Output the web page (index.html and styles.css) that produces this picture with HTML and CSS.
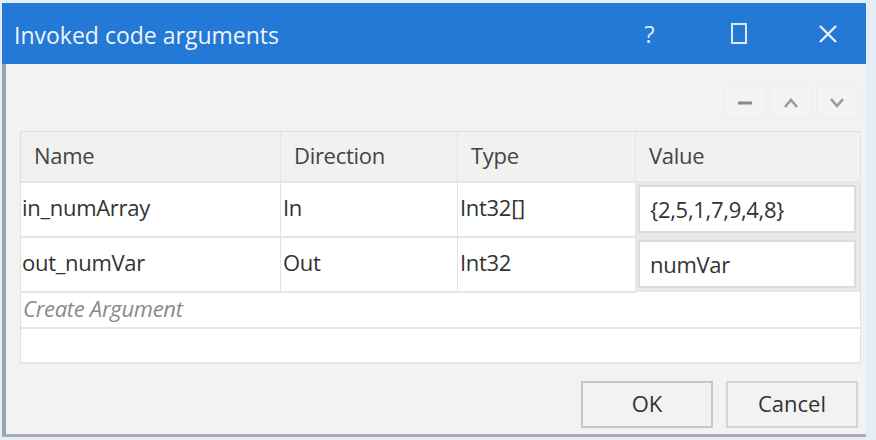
FILE: index.html
```html
<!DOCTYPE html>
<html>
<head>
  <title>Invoked code arguments</title>
  <link rel="stylesheet" href="styles.css">
</head>
<body>
  <div class="window">
    <div class="titlebar">
      <span class="title">Invoked code arguments</span>
      <div class="controls">
        <span class="ctl help">?</span>
        <span class="ctl"><span class="max-box"></span></span>
        <span class="ctl">
          <svg width="20" height="20" viewBox="0 0 20 20"><path d="M2 2 L18 18 M18 2 L2 18" stroke="#e6f0fb" stroke-width="2.4"/></svg>
        </span>
      </div>
    </div>
    <div class="content">
      <div class="toolbar">
        <button class="tool-btn">
          <svg width="18" height="10" viewBox="0 0 18 10"><path d="M2 5 H16" stroke="#8a8a8a" stroke-width="3"/></svg>
        </button>
        <button class="tool-btn">
          <svg width="18" height="12" viewBox="0 0 18 12"><path d="M3 10 L9 3 L15 10" fill="none" stroke="#9a9a9a" stroke-width="2.6"/></svg>
        </button>
        <button class="tool-btn">
          <svg width="18" height="12" viewBox="0 0 18 12"><path d="M3 2 L9 9 L15 2" fill="none" stroke="#9a9a9a" stroke-width="2.6"/></svg>
        </button>
      </div>
      <table class="args">
        <colgroup>
          <col style="width: 260px">
          <col style="width: 177px">
          <col style="width: 178px">
          <col style="width: 225px">
        </colgroup>
        <thead>
          <tr>
            <th>Name</th>
            <th>Direction</th>
            <th>Type</th>
            <th>Value</th>
          </tr>
        </thead>
        <tbody>
          <tr class="arg-row">
            <td class="name">in_numArray</td>
            <td>In</td>
            <td>Int32[]</td>
            <td class="value"><div class="value-box">{2,5,1,7,9,4,8}</div></td>
          </tr>
          <tr class="arg-row">
            <td class="name">out_numVar</td>
            <td>Out</td>
            <td>Int32</td>
            <td class="value"><div class="value-box">numVar</div></td>
          </tr>
          <tr class="create-row">
            <td colspan="4">Create Argument</td>
          </tr>
          <tr class="empty-row">
            <td colspan="4"></td>
          </tr>
        </tbody>
      </table>
      <div class="footer">
        <button class="dlg-btn ok">OK</button>
        <button class="dlg-btn">Cancel</button>
      </div>
    </div>
  </div>
</body>
</html>
```

FILE: styles.css
```css
* {
  box-sizing: border-box;
}

body {
  margin: 0;
  width: 876px;
  height: 440px;
  overflow: hidden;
  background-color: #e4ecf4;
  font-family: "Open Sans", "Noto Sans", sans-serif;
  color: #333;
}

.window {
  margin: 3px 10px 0 2px;
  height: 434px;
  background-color: #f2f2f2;
  border-left: 4px solid #9ea3a8;
  border-bottom: 3px solid #a9adb2;
  display: flex;
  flex-direction: column;
}

.titlebar {
  height: 61px;
  margin-left: -4px;
  background-color: #2479d6;
  display: flex;
  align-items: center;
  justify-content: space-between;
  padding: 0 0 0 12px;
}

.title {
  color: #eef4fb;
  font-size: 23px;
  letter-spacing: 0;
  padding-top: 2px;
}

.controls {
  display: flex;
  align-items: center;
  margin-right: -6px;
}

.ctl {
  width: 89px;
  display: flex;
  justify-content: center;
  align-items: center;
  color: #dde9f7;
}

.help {
  font-size: 24px;
}

.max-box {
  display: block;
  width: 16px;
  height: 21px;
  border: 2px solid #dde9f7;
}

.content {
  flex: 1;
  padding: 22px 8px 0 14px;
  display: flex;
  flex-direction: column;
}

.toolbar {
  display: flex;
  justify-content: flex-end;
  gap: 4px;
  height: 35px;
}

.tool-btn {
  width: 42px;
  height: 33px;
  border: 1px solid #ededed;
  background-color: #f3f3f3;
  display: flex;
  align-items: center;
  justify-content: center;
  padding: 0;
}

.args {
  margin-top: 10px;
  width: 840px;
  table-layout: fixed;
  border-collapse: collapse;
  font-size: 22px;
  letter-spacing: -0.3px;
  background-color: #fff;
  border: 1px solid #dedede;
}

.args th {
  height: 50px;
  background-color: #f1f1f1;
  text-align: left;
  font-weight: normal;
  color: #444;
  padding: 0 0 2px 13px;
  border-right: 1px solid #e3e3e3;
  border-bottom: 2px solid #e6e6e6;
}

.args td {
  padding: 0 0 4px 2px;
  border-right: 1px solid #e3e3e3;
  border-bottom: 2px solid #e6e6e6;
  white-space: nowrap;
}

.arg-row td {
  height: 55px;
}

.args td.name {
  padding-left: 1px;
}

.args td.value {
  padding: 2px 4px 3px 2px;
  background-color: #e9e9e9;
  border-bottom: none;
}

.value-box {
  height: 48px;
  background-color: #fff;
  border: 2px solid #dcdcdc;
  padding: 7px 10px 0;
}

.create-row td {
  height: 35px;
  font-style: italic;
  color: #8a8a8a;
  padding-left: 2px;
}

.empty-row td {
  height: 35px;
}

.footer {
  display: flex;
  justify-content: flex-end;
  gap: 13px;
  margin-top: 17px;
}

.dlg-btn {
  width: 132px;
  height: 47px;
  background-color: #f2f2f2;
  border: 2px solid #d4d4d4;
  font-family: "Open Sans", "Noto Sans", sans-serif;
  font-size: 22px;
  color: #333;
  padding: 0 0 3px;
}

.ok {
  border-color: #c6c6c6;
}
```
